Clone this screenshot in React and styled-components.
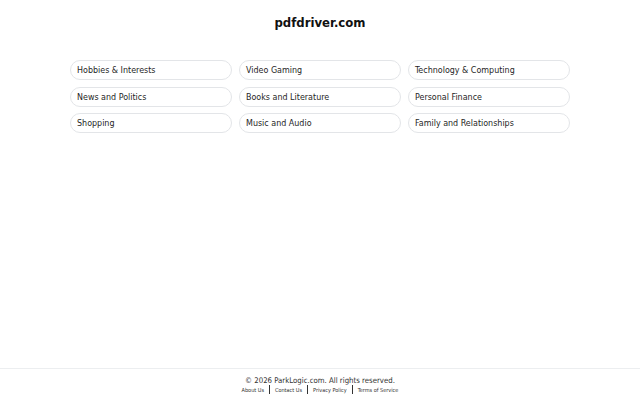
import React from 'react';
import styled, { createGlobalStyle } from 'styled-components';

const categories = [
    'Hobbies & Interests',
    'Video Gaming',
    'Technology & Computing',
    'News and Politics',
    'Books and Literature',
    'Personal Finance',
    'Shopping',
    'Music and Audio',
    'Family and Relationships',
];

const links = ['About Us', 'Contact Us', 'Privacy Policy', 'Terms of Service'];

function App() {
    return (
        <Page>
            <GlobalStyle />
            <Main>
                <Title>pdfdriver.com</Title>
                <Grid>
                    {categories.map((c) => (
                        <Pill key={c}>{c}</Pill>
                    ))}
                </Grid>
            </Main>
            <Footer>
                <Copy>© 2026 ParkLogic.com. All rights reserved.</Copy>
                <Links>
                    {links.map((l, i) => (
                        <React.Fragment key={l}>
                            {i > 0 && <Sep />}
                            <FootLink>{l}</FootLink>
                        </React.Fragment>
                    ))}
                </Links>
            </Footer>
        </Page>
    );
}

const GlobalStyle = createGlobalStyle`
    body {
        margin: 0;
        background: #fff;
        font-family: "DejaVu Sans Condensed", "DejaVu Sans", sans-serif;
        font-stretch: condensed;
        color: #111;
    }
`;
const Page = styled.div`
    min-height: 100vh;
    display: flex;
    flex-direction: column;
`;
const Main = styled.main`
    flex: 1;
    padding-top: 15px;
`;
const Title = styled.h1`
    margin: 0;
    text-align: center;
    font-size: 13px;
    font-weight: 700;
    line-height: 16px;
    color: #111;
`;
const Grid = styled.div`
    width: 500px;
    margin: 29px auto 0;
    display: grid;
    grid-template-columns: repeat(3, 1fr);
    column-gap: 7px;
    row-gap: 6.5px;
`;
const Pill = styled.div`
    height: 20px;
    box-sizing: border-box;
    border: 1px solid #e3e5e8;
    border-radius: 10px;
    padding: 0 6px;
    display: flex;
    align-items: center;
    font-size: 8.9px;
    color: #1f1f1f;
`;
const Footer = styled.footer`
    border-top: 1px solid #eceef0;
    height: 32px;
    box-sizing: border-box;
    padding-top: 7px;
    text-align: center;
`;
const Copy = styled.div`
    font-size: 7.75px;
    line-height: 10px;
    color: #333;
`;
const Links = styled.div`
    display: flex;
    justify-content: center;
    align-items: center;
    gap: 5px;
    margin-top: -1px;
`;
const FootLink = styled.span`
    font-size: 5.5px;
    color: #333;
`;
const Sep = styled.span`
    width: 1px;
    height: 9px;
    background: #333;
`;

export default App;
